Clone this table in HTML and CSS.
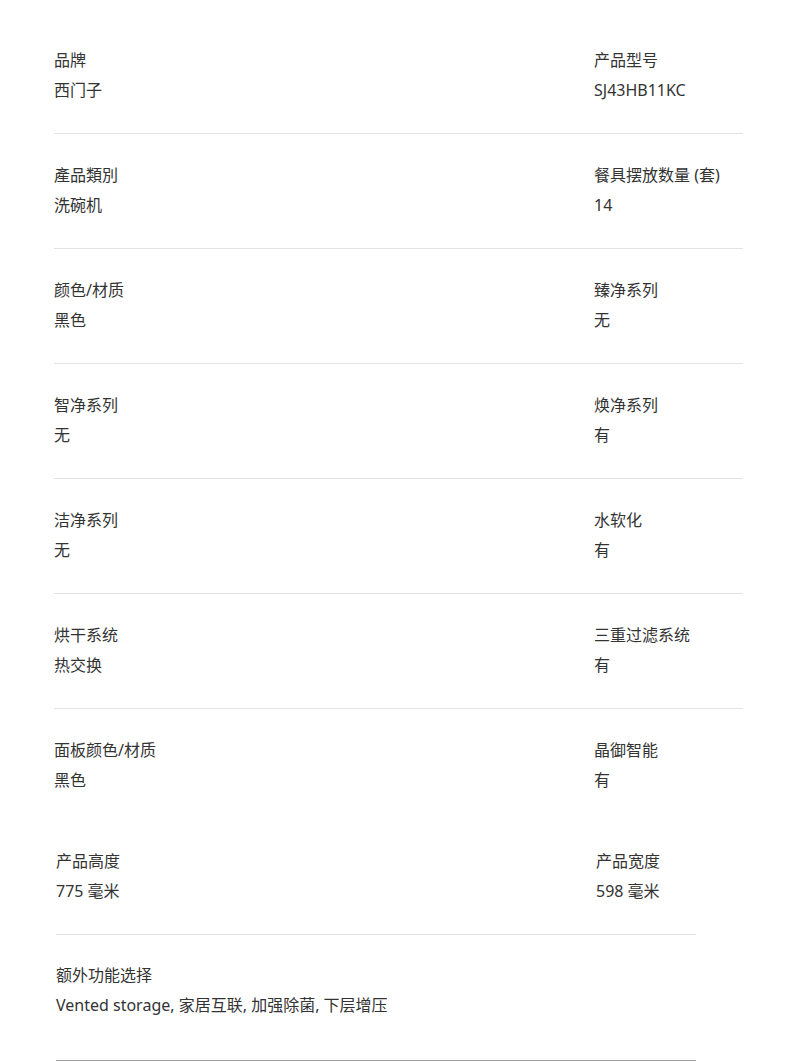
FILE: index.html
```html
<!DOCTYPE html>
<html lang="zh-CN">
<head>
<meta charset="utf-8">
<title>产品规格</title>
<link rel="stylesheet" href="styles.css">
</head>
<body>
<div class="specs">
  <div class="row">
    <div class="cell"><div class="label">品牌</div><div class="value">西门子</div></div>
    <div class="cell"><div class="label">产品型号</div><div class="value">SJ43HB11KC</div></div>
  </div>
  <div class="row">
    <div class="cell"><div class="label">產品類別</div><div class="value">洗碗机</div></div>
    <div class="cell"><div class="label">餐具摆放数量 (套)</div><div class="value">14</div></div>
  </div>
  <div class="row">
    <div class="cell"><div class="label">颜色/材质</div><div class="value">黑色</div></div>
    <div class="cell"><div class="label">臻净系列</div><div class="value">无</div></div>
  </div>
  <div class="row">
    <div class="cell"><div class="label">智净系列</div><div class="value">无</div></div>
    <div class="cell"><div class="label">焕净系列</div><div class="value">有</div></div>
  </div>
  <div class="row">
    <div class="cell"><div class="label">洁净系列</div><div class="value">无</div></div>
    <div class="cell"><div class="label">水软化</div><div class="value">有</div></div>
  </div>
  <div class="row">
    <div class="cell"><div class="label">烘干系统</div><div class="value">热交换</div></div>
    <div class="cell"><div class="label">三重过滤系统</div><div class="value">有</div></div>
  </div>
  <div class="row row-plain">
    <div class="cell"><div class="label">面板颜色/材质</div><div class="value">黑色</div></div>
    <div class="cell"><div class="label">晶御智能</div><div class="value">有</div></div>
  </div>
</div>
<div class="dims">
  <div class="row row-dim">
    <div class="cell"><div class="label">产品高度</div><div class="value">775 毫米</div></div>
    <div class="cell"><div class="label">产品宽度</div><div class="value">598 毫米</div></div>
  </div>
  <div class="row row-extra">
    <div class="cell"><div class="label">额外功能选择</div><div class="value">Vented storage, 家居互联, 加强除菌, 下层增压</div></div>
  </div>
</div>
</body>
</html>
```
FILE: styles.css
```css
html, body {
  margin: 0;
  padding: 0;
  background: #ffffff;
}

body {
  font-family: "Noto Sans", "Noto Sans CJK SC", sans-serif;
  font-size: 16px;
  color: #333333;
}

.specs {
  margin-left: 54px;
  width: 689px;
  padding-top: 19px;
}

.row {
  display: grid;
  grid-template-columns: 540px 1fr;
  padding: 26px 0 28px;
  border-bottom: 1px solid #e3e3e3;
}

.row-plain {
  border-bottom: none;
}

.label,
.value {
  line-height: 30px;
  white-space: nowrap;
}

.dims {
  margin-left: 56px;
  width: 640px;
}

.row-dim {
  padding-top: 23px;
}

.row-extra {
  grid-template-columns: 1fr;
  padding: 25px 0 40px;
  border-bottom: 1px solid #9e9e9e;
}
```
